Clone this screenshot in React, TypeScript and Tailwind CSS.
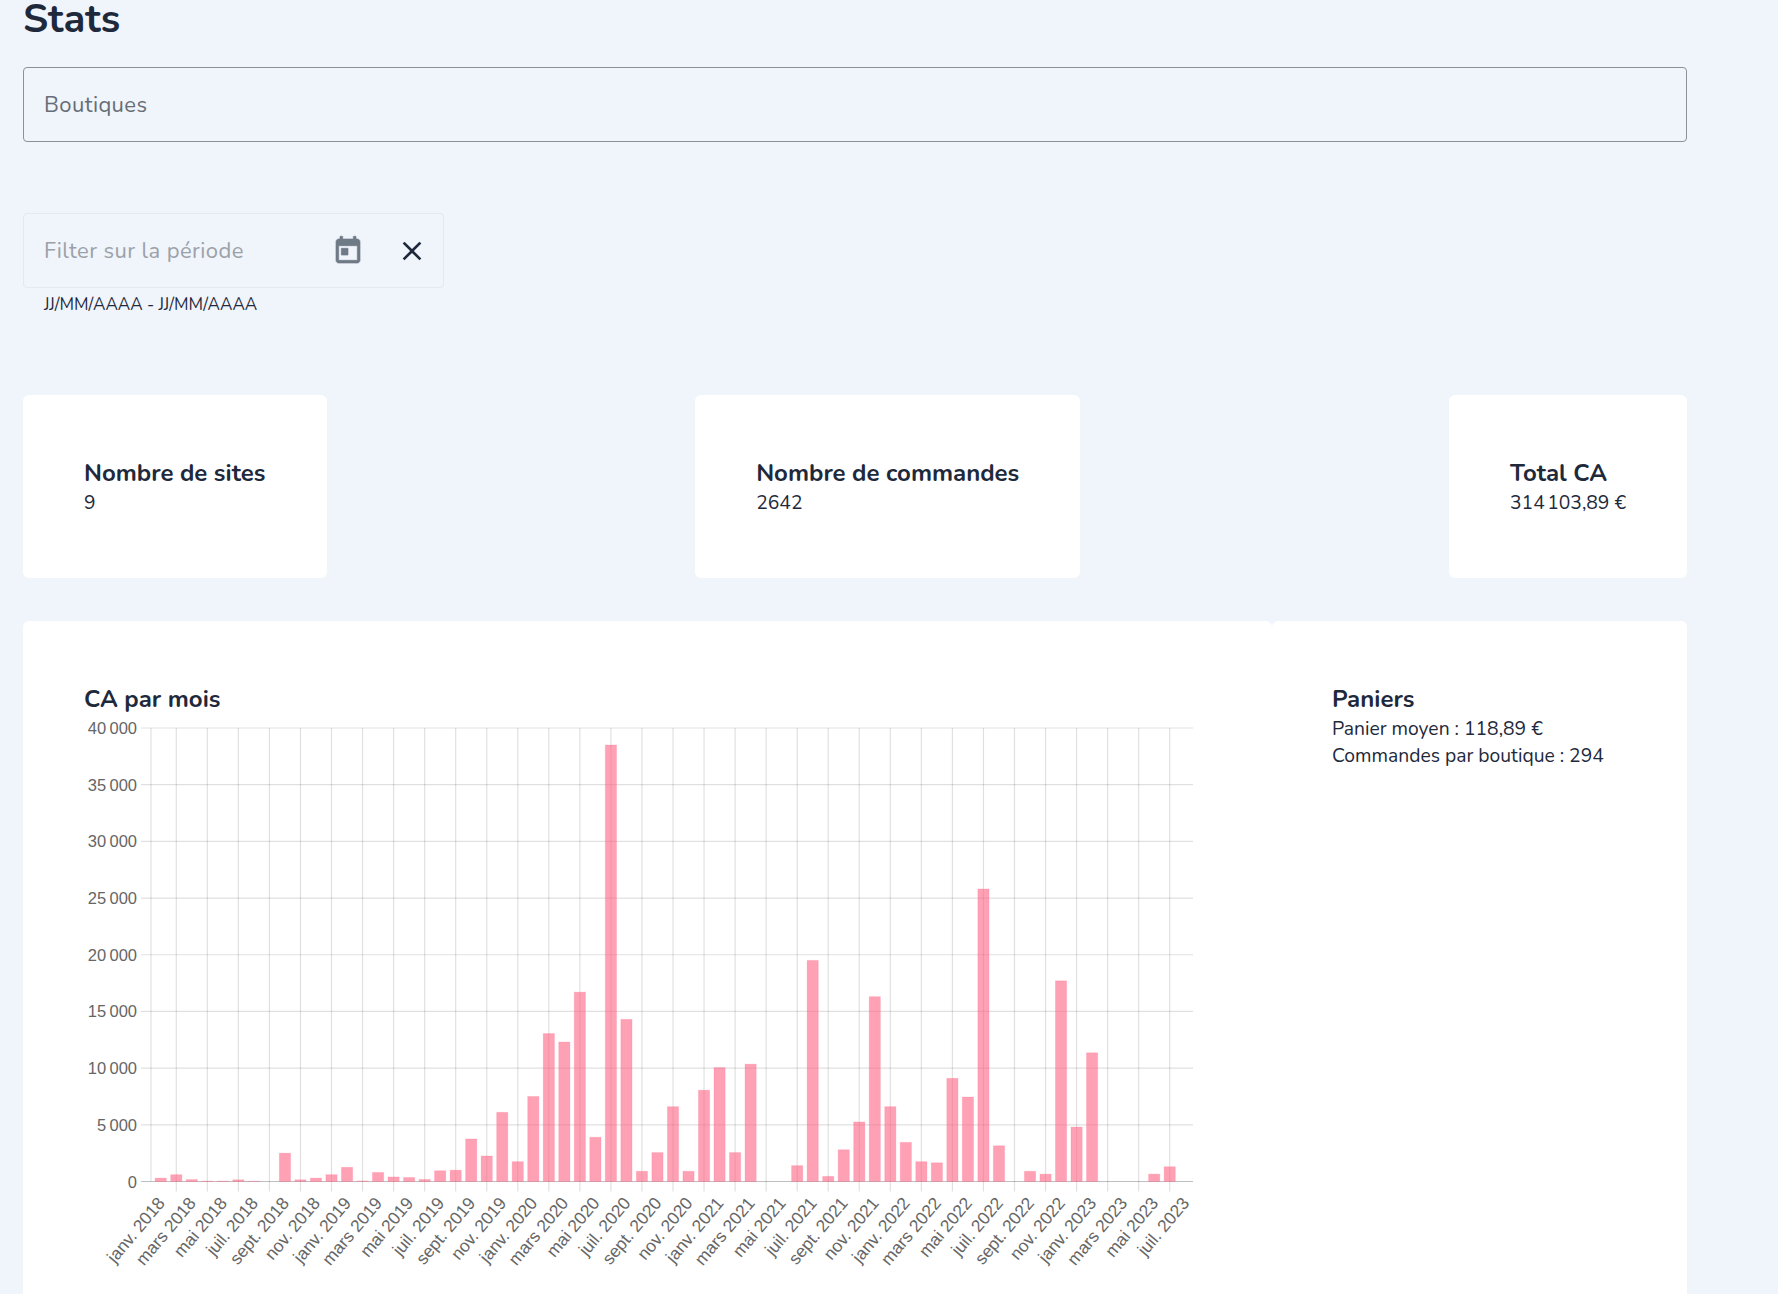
const bars = [
  300, 600, 170, 40, 40, 150, 30, 0, 2500, 150, 300, 600, 1250, 50, 800, 400, 350, 180, 950, 1000, 3750, 2250, 6100,
  1750, 7500, 13050, 12300, 16700, 3900, 38500, 14300, 900, 2550, 6600, 900, 8050, 10050, 2550, 10350, 0, 0, 1400,
  19500, 450, 2800, 5250, 16300, 6600, 3450, 1750, 1650, 9100, 7450, 25800, 3150, 0, 900, 650, 17700, 4800, 11350, 0,
  0, 0, 650, 1300, 0,
];

const months = ["janv.", "mars", "mai", "juil.", "sept.", "nov."];
const yTicks = [0, 5000, 10000, 15000, 20000, 25000, 30000, 35000, 40000];

// chart drawing area, in svg coordinates
const axisX = 68;
const left = 70;
const right = 1110;
const top = 13;
const plotH = 453.5;
const pitch = (right - left) / bars.length;

const fmt = (n: number) => (n === 0 ? "0" : `${Math.floor(n / 1000)}\u202f000`);
const yOf = (v: number) => top + plotH - (v / 40000) * plotH;

const BarChart = () => {
  const labels: { x: number; text: string }[] = [];
  for (let i = 0; i < bars.length; i += 2) {
    const year = 2018 + Math.floor(i / 12);
    labels.push({ x: left + (i + 0.5) * pitch, text: `${months[(i % 12) / 2]} ${year}` });
  }
  return (
    <svg width={1130} height={570} className="block">
      {yTicks.map((t) => (
        <g key={t}>
          <line
            x1={axisX - 10}
            x2={right}
            y1={yOf(t)}
            y2={yOf(t)}
            stroke="#000"
            strokeWidth={1.2}
            strokeOpacity={t === 0 ? 0.25 : 0.12}
          />
          <text x={axisX - 14} y={yOf(t) + 6} textAnchor="end" fontSize={16.5} fill="#666" fontFamily="Liberation Sans">
            {fmt(t)}
          </text>
        </g>
      ))}
      <line x1={axisX} x2={axisX} y1={top} y2={top + plotH} stroke="#000" strokeWidth={1.2} strokeOpacity={0.12} />
      {labels.slice(0, -1).map((l, i) => (
        <line
          key={i}
          x1={l.x + pitch}
          x2={l.x + pitch}
          y1={top}
          y2={top + plotH + 10}
          stroke="#000"
          strokeWidth={1.2}
          strokeOpacity={0.12}
        />
      ))}
      {bars.map((v, i) =>
        v > 0 ? (
          <rect
            key={i}
            x={left + (i + 0.14) * pitch}
            y={yOf(v)}
            width={pitch * 0.72}
            height={top + plotH - yOf(v)}
            fill="#ff6384"
            fillOpacity={0.6}
            stroke="#ff6384"
            strokeOpacity={0.2}
          />
        ) : null
      )}
      {labels.map((l) => (
        <text
          key={l.text}
          textAnchor="end"
          fontSize={17.4}
          fill="#666"
          fontFamily="Liberation Sans"
          transform={`translate(${l.x + 5} ${top + plotH + 22}) rotate(-50)`}
        >
          {l.text}
        </text>
      ))}
    </svg>
  );
};

const StatCard = ({ title, value }: { title: string; value: string }) => (
  <div className="h-[183px] rounded-md bg-white px-[61px] pt-[62px]">
    <h6 className="text-[24px] leading-[32px] font-bold whitespace-nowrap text-[#1e293b]">{title}</h6>
    <p className="text-[19.3px] leading-[27px] text-[#1e293b]">{value}</p>
  </div>
);

export default function App() {
  return (
    <div className="h-[1294px] overflow-hidden bg-[#f0f4fb] font-['Nunito','Lato','Noto_Sans',sans-serif]">
      <div className="ml-[23px] w-[1664px]">
        <h1 className="h-[42px] text-[40px] leading-[38px] font-bold text-[#1e293b]">Stats</h1>
        <div className="mt-[25px] flex h-[75px] items-center rounded border border-[#8c9197] pt-[1px] pl-[20px] text-[22px] tracking-[0.4px] text-[#666d75]">
          Boutiques
        </div>
        <div className="mt-[71px] flex h-[75px] w-[421px] items-center justify-between rounded border border-[#e4e8ef] pr-[15px] pl-[20px]">
          <span className="pt-[1px] text-[22px] tracking-[0.4px] text-[#9ba1a8]">Filter sur la période</span>
          <div className="flex items-center gap-[32px]">
            <svg viewBox="0 0 24 24" width={32} height={32} fill="#6f7a87" stroke="#6f7a87" strokeWidth={0.5}>
              <path d="M19 3h-1V1h-2v2H8V1H6v2H5c-1.11 0-1.99.9-1.99 2L3 19c0 1.1.89 2 2 2h14c1.1 0 2-.9 2-2V5c0-1.1-.9-2-2-2zm0 16H5V8h14v11zM7 10h5v5H7z" />
            </svg>
            <svg viewBox="0 0 24 24" width={32} height={32} fill="#1e293b">
              <path d="M19 6.41 17.59 5 12 10.59 6.41 5 5 6.41 10.59 12 5 17.59 6.41 19 12 13.41 17.59 19 19 17.59 13.41 12z" />
            </svg>
          </div>
        </div>
        <p className="mt-[6px] pl-[21px] text-[17px] leading-[22px] text-[#1e293b]">JJ/MM/AAAA - JJ/MM/AAAA</p>
        <div className="mt-[79px] flex justify-between">
          <StatCard title="Nombre de sites" value="9" />
          <StatCard title="Nombre de commandes" value="2642" />
          <StatCard title="Total CA" value={"314\u202f103,89 €"} />
        </div>
        <div className="mt-[43px] flex">
          <div className="h-[700px] w-[1249px] rounded-md bg-white pt-[62px] pl-[61px]">
            <h6 className="text-[24px] leading-[32px] font-bold text-[#1e293b]">CA par mois</h6>
            <div className="ml-[-1px]">
              <BarChart />
            </div>
          </div>
          <div className="h-[700px] flex-1 rounded-md bg-white pt-[62px] pl-[60px]">
            <h6 className="text-[24px] leading-[32px] font-bold text-[#1e293b]">Paniers</h6>
            <p className="text-[19.3px] leading-[27px] text-[#1e293b]">Panier moyen : 118,89 €</p>
            <p className="text-[19.3px] leading-[27px] text-[#1e293b]">Commandes par boutique : 294</p>
          </div>
        </div>
      </div>
    </div>
  );
}
